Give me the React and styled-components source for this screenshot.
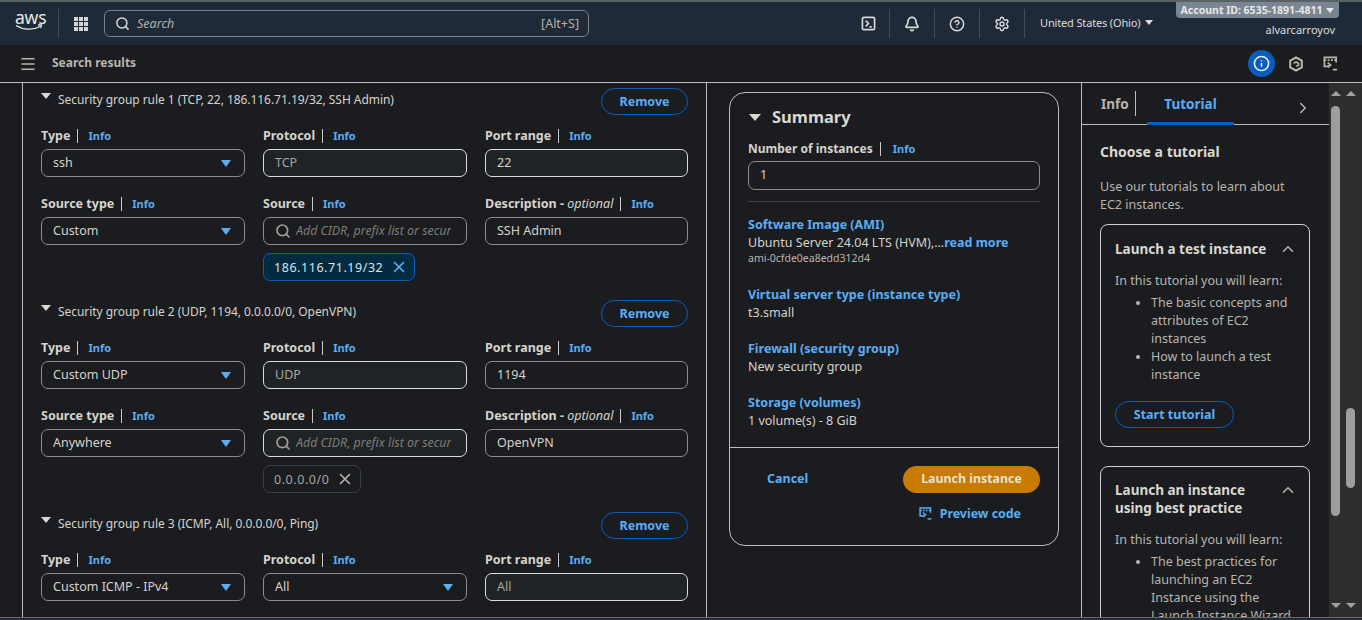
import React from 'react'
import styled, { createGlobalStyle } from 'styled-components'
import { Menu, Search, Bell, CircleHelp, Settings, X, ChevronUp, ChevronRight, Info as InfoIcon } from 'lucide-react'

const Global = createGlobalStyle`
  html, body { margin: 0; padding: 0; background: #1a1c1f; overflow: hidden; }
  * { box-sizing: border-box; }
  body { font-family: "Noto Sans", "Open Sans", sans-serif; font-size: 13px; color: #d6d3cc; }
`

const Page = styled.div`
  width: 1362px;
  height: 620px;
  display: flex;
  flex-direction: column;
  overflow: hidden;
  border-top: 2px solid #5b6266;
`
const Header = styled.header`
  height: 43px;
  flex: none;
  background: #1f2a38;
  display: flex;
  align-items: center;
  padding-left: 15px;
`
const Logo = styled.div`
  width: 43px;
  height: 29px;
  display: flex;
  flex-direction: column;
  color: #e8e8e8;
  font-size: 17.5px;
  line-height: 16px;
  letter-spacing: -0.2px;
  svg { display: block; margin-top: -1px; }
`
const Sep = styled.span`
  width: 1px;
  height: 29px;
  background: #414d5c;
  flex: none;
`
const GridIcon = styled.div`
  margin-left: 15px;
  width: 14px;
  display: grid;
  grid-template-columns: repeat(3, 4px);
  gap: 1px;
  span { height: 4px; background: #d5d5d5; }
`
const SearchBox = styled.div`
  margin-left: 16px;
  width: 485px;
  height: 27px;
  border: 1px solid #7f8184;
  border-radius: 6px;
  display: flex;
  align-items: center;
  padding: 0 9px 0 10px;
  color: #b5b2ab;
  font-size: 12.5px;
  em { margin-left: 7px; flex: 1; }
`
const HeadIcon = styled.div`
  width: 44px;
  flex: none;
  display: flex;
  justify-content: center;
  color: #d8d8d8;
`
const ShellIcon = styled(HeadIcon)`
  margin-left: 258px;
  width: 42px;
`
const Region = styled.div`
  margin-left: 15px;
  width: 136px;
  font-size: 11px;
  letter-spacing: -0.15px;
  color: #dcdcdc;
  display: flex;
  align-items: center;
  gap: 5px;
  margin-top: -3px;
`
const Caret = styled.span`
  width: 0;
  height: 0;
  flex: none;
  border-left: ${p => p.$size}px solid transparent;
  border-right: ${p => p.$size}px solid transparent;
  border-top: ${p => p.$size + 1}px solid ${p => p.$color};
`
const Account = styled.div`
  align-self: flex-start;
  display: flex;
  flex-direction: column;
  align-items: flex-end;
  width: 163px;
`
const AccountBadge = styled.div`
  width: 163px;
  height: 16px;
  background: #7a8592;
  border-radius: 0 0 4px 4px;
  color: #e8e8e8;
  font-size: 10.5px;
  font-weight: 700;
  display: flex;
  align-items: center;
  justify-content: center;
  gap: 4px;
  white-space: nowrap;
`
const UserName = styled.div`
  margin-top: 4px;
  padding-right: 4px;
  font-size: 11px;
  color: #dcdcdc;
`
const SubBar = styled.div`
  height: 38px;
  flex: none;
  display: flex;
  align-items: center;
  padding: 0 22px 0 19px;
  border-bottom: 1px solid #bdbdbd;
  color: #b9b5ad;
  strong { margin-left: 15px; margin-top: -2px; font-size: 12px; flex: 1; }
`
const BlueCircle = styled.div`
  width: 27px;
  height: 27px;
  border-radius: 50%;
  background: #0a5dbf;
  color: #e8eef5;
  display: flex;
  align-items: center;
  justify-content: center;
`
const SubIcon = styled.div`
  margin-left: ${p => p.$gap}px;
  width: 20px;
  display: flex;
  justify-content: center;
`
const Main = styled.div`
  flex: 1;
  min-height: 0;
  display: flex;
`
const Form = styled.section`
  margin-left: 22px;
  width: 685px;
  flex: none;
  border-left: 1px solid #bdbdbd;
  border-right: 1px solid #bdbdbd;
  padding: 5px 18px 0;
  overflow: hidden;
`
const Rule = styled.div`
  margin-bottom: 19px;
`
const RuleHead = styled.div`
  height: 27px;
  margin-bottom: 12px;
  display: flex;
  justify-content: space-between;
`
const RuleTitle = styled.div`
  display: flex;
  gap: 7px;
  font-size: 12px;
  letter-spacing: -0.05px;
  line-height: 24px;
  color: #d6d3cc;
  span:first-child { margin-top: 5px; }
`
const Triangle = styled.span`
  width: 0;
  height: 0;
  flex: none;
  align-self: ${p => (p.$center ? 'center' : 'flex-start')};
  border-left: ${p => p.$size}px solid transparent;
  border-right: ${p => p.$size}px solid transparent;
  border-top: ${p => p.$size + 1}px solid #d9d7d1;
`
const OutlineButton = styled.button`
  width: ${p => p.$width}px;
  height: 27px;
  border: 1px solid #0a5dbf;
  border-radius: 14px;
  background: none;
  color: #5aaef5;
  font: 700 12.5px "Noto Sans", sans-serif;
  padding: 0;
`
const Fields = styled.div`
  display: grid;
  grid-template-columns: 204px 204px 203px;
  column-gap: 18px;
  row-gap: 18px;
  align-items: start;
`
const LabelRow = styled.div`
  height: 16px;
  margin-bottom: 6px;
  display: flex;
  align-items: center;
  font-size: 12.5px;
  font-weight: 700;
  color: #d5d3cd;
  white-space: nowrap;
  em { font-weight: 400; }
`
const InfoLink = styled.span`
  margin-left: 7px;
  padding-left: 10px;
  margin-top: 1px;
  height: 14px;
  line-height: 14px;
  border-left: 1px solid #c9c9c9;
  font-size: 11px;
  font-weight: 700;
  color: #5aaef5;
`
const CountLabel = styled(LabelRow)`
  font-size: 12px;
  margin-bottom: 5px;
  ${InfoLink} { padding-left: 12px; }
`
const Control = styled.div`
  height: 28px;
  border-radius: 7px;
  border: 1px solid ${p => (p.$disabled ? '#dcdcdc' : '#8d8d8d')};
  background: ${p => (p.$disabled ? '#1f2325' : 'transparent')};
  color: ${p => (p.$muted ? '#a8a6a0' : '#d6d3cc')};
  font-size: 12.5px;
  display: flex;
  align-items: center;
  padding: 0 11px 2px;
  overflow: hidden;
  white-space: nowrap;
`
const SelectCaret = styled.span`
  margin-left: auto;
  margin-right: 2px;
  margin-top: 2px;
  width: 0;
  height: 0;
  border-left: 5px solid transparent;
  border-right: 5px solid transparent;
  border-top: 7px solid #5aaef5;
`
const Placeholder = styled.em`
  margin-left: 5px;
  color: #7f7d78;
  font-size: 12.4px;
  overflow: hidden;
`
const Token = styled.div`
  margin-top: 8px;
  height: 28px;
  width: fit-content;
  display: flex;
  align-items: center;
  gap: 7px;
  padding: 0 6px 0 10px;
  font-size: 12.5px;
  letter-spacing: 0.55px;
  border-radius: 7px;
  border: 1px solid ${p => (p.$active ? '#0a5dbf' : '#3c3f42')};
  background: ${p => (p.$active ? '#022b3f' : 'transparent')};
  color: ${p => (p.$active ? '#d6e4ee' : '#a8a6a0')};
  svg { color: ${p => (p.$active ? '#5aaef5' : '#b5b2ab')}; }
`
const SummaryCol = styled.section`
  width: 375px;
  flex: none;
  padding: 9px 22px 0 22px;
  border-right: 1px solid #bdbdbd;
`
const SummaryCard = styled.div`
  width: 330px;
  height: 454px;
  border: 1px solid #bdbdbd;
  border-radius: 16px;
  display: flex;
  flex-direction: column;
`
const SummaryBody = styled.div`
  height: 355px;
  flex: none;
  padding: 13px 18px 0;
  border-bottom: 1px solid #bdbdbd;
`
const SummaryTitle = styled.h2`
  margin: 0 0 12px;
  display: flex;
  align-items: center;
  gap: 11px;
  font-size: 16.5px;
  line-height: 22px;
  color: #d9d7d1;
  padding-left: 1px;
`
const CountInput = styled(Control)`
  height: 29px;
`
const Divider = styled.div`
  margin: 11px 0 14px;
  height: 1px;
  background: #414345;
`
const SumGroup = styled.div`
  margin-bottom: 18px;
  line-height: 18px;
  font-size: 12.5px;
`
const SumLink = styled.div`
  font-weight: 700;
  color: #5aaef5;
`
const ReadMore = styled.span`
  font-weight: 700;
  color: #5aaef5;
`
const AmiId = styled.div`
  margin-top: -1px;
  padding-bottom: 3px;
  font-size: 10.5px;
  line-height: 14px;
  color: #b9b5ad;
`
const SummaryFoot = styled.div`
  padding: 18px 18px 0 37px;
  display: flex;
  justify-content: space-between;
  align-items: flex-start;
`
const Cancel = styled.div`
  font-weight: 700;
  font-size: 12.5px;
  line-height: 26px;
  color: #5aaef5;
`
const FootRight = styled.div`
  display: flex;
  flex-direction: column;
  align-items: flex-end;
  gap: 12px;
`
const Launch = styled.div`
  width: 137px;
  height: 27px;
  border-radius: 14px;
  background: #c97a00;
  color: #e6e0d4;
  font-weight: 700;
  font-size: 12.4px;
  padding-bottom: 2px;
  display: flex;
  align-items: center;
  justify-content: center;
`
const Preview = styled.div`
  display: flex;
  align-items: center;
  gap: 7px;
  padding-right: 19px;
  font-weight: 700;
  font-size: 12.4px;
  color: #5aaef5;
`
const Help = styled.aside`
  width: 247px;
  flex: none;
  overflow: hidden;
`
const Tabs = styled.div`
  height: 42px;
  border-bottom: 1px solid #bdbdbd;
  display: flex;
  padding-left: 19px;
  position: relative;
  font-size: 13.5px;
  font-weight: 700;
`
const TabInfo = styled.div`
  width: 35px;
  line-height: 43px;
  color: #b9b5ad;
  position: relative;
  &::after {
    content: '';
    position: absolute;
    right: 0;
    top: 8px;
    height: 25px;
    width: 1px;
    background: #bdbdbd;
  }
`
const TabActive = styled.div`
  width: 87px;
  margin-left: 11px;
  text-align: center;
  line-height: 43px;
  color: #5aaef5;
  border-bottom: 3px solid #0a5dbf;
  height: 42px;
`
const TabNext = styled.div`
  position: absolute;
  right: 17px;
  top: 16px;
  color: #b9b5ad;
  display: flex;
`
const HelpBody = styled.div`
  padding: 17px 18px 0 18px;
`
const HelpTitle = styled.h3`
  margin: 0 0 16px;
  font-size: 14px;
  line-height: 20px;
  color: #d9d7d1;
`
const HelpText = styled.p`
  margin: 0 20px 10px 0;
  font-size: 12.5px;
  line-height: 18px;
  color: #b9b5ad;
`
const TutorialCard = styled.div`
  width: 210px;
  border: 1px solid #d0d0d0;
  border-radius: 8px;
  padding: ${p => p.$top}px 14px 18px;
  margin-bottom: 19px;
  flex: none;
`
const CardHead = styled.div`
  display: flex;
  justify-content: space-between;
  align-items: flex-start;
  margin-bottom: 14px;
  font-size: 13.5px;
  font-weight: 700;
  line-height: 18px;
  color: #d9d7d1;
  svg { color: #b9b5ad; margin-right: -2px; flex: none; }
`
const Learn = styled.div`
  font-size: 12.5px;
  line-height: 18px;
  color: #b9b5ad;
  margin-bottom: 4px;
`
const Bullets = styled.ul`
  margin: 0 0 17px;
  padding-left: 36px;
  font-size: 12.5px;
  line-height: 18px;
  color: #b9b5ad;
`
const Scrollbars = styled.div`
  flex: 1;
  background: #2e2e2e;
  display: flex;
  padding: 0 7px 0 2px;
  justify-content: space-between;
`
const Track = styled.div`
  width: 9px;
  display: flex;
  flex-direction: column;
  align-items: center;
  padding: 8px 0 9px;
`
const Arrow = styled.span`
  width: 0;
  height: 0;
  border-left: 5px solid transparent;
  border-right: 5px solid transparent;
  ${p => (p.$down ? 'margin-top: auto; border-top: 5px solid #a0a0a0;' : 'border-bottom: 5px solid #a0a0a0;')}
`
const Thumb = styled.div`
  width: 9px;
  border-radius: 5px;
  background: #9e9e9e;
  height: ${p => p.$height}px;
  margin-top: ${p => p.$offset}px;
`
const FootStrip = styled.div`
  height: 3px;
  flex: none;
  background: #1f2a38;
  border-top: 1px solid #6f6a60;
`

const Label = ({ children }) => (
  <LabelRow>{children}<InfoLink>Info</InfoLink></LabelRow>
)

const TermIcon = ({ color = 'currentColor', size = 18 }) => (
  <svg width={size} height={size} viewBox="0 0 18 18" fill="none" stroke={color} strokeWidth="1.8">
    <path d="M8 12H2.5V2.5h12.5V8" />
    <path d="M2.5 5.5h12.5" strokeDasharray="2 1.5" />
    <path d="M6 8l3 2.5L6 13" />
    <path d="M11.5 15.5h4.5" />
  </svg>
)

const Rows = [
  {
    title: 'Security group rule 1 (TCP, 22, 186.116.71.19/32, SSH Admin)',
    type: 'ssh', protocol: 'TCP', port: '22', source: 'Custom',
    desc: 'SSH Admin', token: '186.116.71.19/32', active: true,
  },
  {
    title: 'Security group rule 2 (UDP, 1194, 0.0.0.0/0, OpenVPN)',
    type: 'Custom UDP', protocol: 'UDP', port: '1194', source: 'Anywhere',
    desc: 'OpenVPN', token: '0.0.0.0/0',
  },
]

const RuleBlock = ({ rule }) => (
  <Rule>
    <RuleHead>
      <RuleTitle><Triangle $size={5} /><div>{rule.title}</div></RuleTitle>
      <OutlineButton $width={87}>Remove</OutlineButton>
    </RuleHead>
    <Fields>
      <div>
        <Label>Type</Label>
        <Control>{rule.type}<SelectCaret /></Control>
      </div>
      <div>
        <Label>Protocol</Label>
        <Control $disabled $muted>{rule.protocol}</Control>
      </div>
      <div>
        <Label>Port range</Label>
        <Control $disabled={rule.active}>{rule.port}</Control>
      </div>
      <div>
        <Label>Source type</Label>
        <Control>{rule.source}<SelectCaret /></Control>
      </div>
      <div>
        <Label>Source</Label>
        <Control $disabled={!rule.active}>
          <Search size={16} color="#a09c94" strokeWidth={2.6} style={{ flex: 'none', marginTop: '2px' }} />
          <Placeholder>Add CIDR, prefix list or secur</Placeholder>
        </Control>
        <Token $active={rule.active}>{rule.token}<X size={18} strokeWidth={2.2} /></Token>
      </div>
      <div>
        <LabelRow>Description -&nbsp;<em>optional</em><InfoLink>Info</InfoLink></LabelRow>
        <Control>{rule.desc}</Control>
      </div>
    </Fields>
  </Rule>
)

export default function App() {
  return (
    <Page>
      <Global />
      <Header>
        <Logo>
          aws
          <svg width="28" height="8" viewBox="0 0 28 8" fill="none" stroke="#e8e8e8" strokeWidth="1.3">
            <path d="M1 1.5c7 4.5 17 5 24 1" />
            <path d="M23 1h3.5l-1 3" />
          </svg>
        </Logo>
        <Sep />
        <GridIcon>{Array.from({ length: 9 }).map((_, i) => <span key={i} />)}</GridIcon>
        <SearchBox>
          <Search size={15} color="#d8d8d8" strokeWidth={2.4} />
          <em>Search</em>
          <span>[Alt+S]</span>
        </SearchBox>
        <ShellIcon>
          <svg width="15" height="15" viewBox="0 0 16 16" fill="none" stroke="currentColor" strokeWidth="1.8">
            <rect x="1.5" y="1.5" width="13" height="13" rx="1.5" />
            <path d="M5 5l3 3-3 3M9 11.5h2.5" />
          </svg>
        </ShellIcon>
        <Sep />
        <HeadIcon><Bell size={16} strokeWidth={2.6} /></HeadIcon>
        <Sep />
        <HeadIcon><CircleHelp size={16} strokeWidth={2.2} /></HeadIcon>
        <Sep />
        <HeadIcon><Settings size={16} strokeWidth={2.2} /></HeadIcon>
        <Sep />
        <Region>United States (Ohio)<Caret $size={4} $color="#dcdcdc" /></Region>
        <Account>
          <AccountBadge>Account ID: 6535-1891-4811 <Caret $size={4} $color="#e8e8e8" /></AccountBadge>
          <UserName>alvarcarroyov</UserName>
        </Account>
      </Header>
      <SubBar>
        <Menu size={18} strokeWidth={2} />
        <strong>Search results</strong>
        <BlueCircle><InfoIcon size={17} strokeWidth={2.2} /></BlueCircle>
        <SubIcon $gap={11}>
          <svg width="16" height="16" viewBox="0 0 16 16" fill="none" stroke="currentColor" strokeWidth="2">
            <path d="M8 1.5l5.8 3.2v6.6L8 14.5l-5.8-3.2V4.7z" />
            <path d="M5.5 7.2L8 6l2.5 1.2v2L8 10.4" strokeWidth="1.6" />
          </svg>
        </SubIcon>
        <SubIcon $gap={14}><TermIcon size={17} /></SubIcon>
      </SubBar>
      <Main>
        <Form>
          {Rows.map(r => <RuleBlock key={r.title} rule={r} />)}
          <Rule>
            <RuleHead>
              <RuleTitle><Triangle $size={5} /><div>Security group rule 3 (ICMP, All, 0.0.0.0/0, Ping)</div></RuleTitle>
              <OutlineButton $width={87}>Remove</OutlineButton>
            </RuleHead>
            <Fields>
              <div>
                <Label>Type</Label>
                <Control>Custom ICMP - IPv4<SelectCaret /></Control>
              </div>
              <div>
                <Label>Protocol</Label>
                <Control>All<SelectCaret /></Control>
              </div>
              <div>
                <Label>Port range</Label>
                <Control $disabled $muted>All</Control>
              </div>
            </Fields>
          </Rule>
        </Form>
        <SummaryCol>
          <SummaryCard>
            <SummaryBody>
              <SummaryTitle><Triangle $size={6} $center />Summary</SummaryTitle>
              <CountLabel>Number of instances<InfoLink>Info</InfoLink></CountLabel>
              <CountInput>1</CountInput>
              <Divider />
              <SumGroup>
                <SumLink>Software Image (AMI)</SumLink>
                <div>Ubuntu Server 24.04 LTS (HVM),...<ReadMore>read more</ReadMore></div>
                <AmiId>ami-0cfde0ea8edd312d4</AmiId>
              </SumGroup>
              <SumGroup>
                <SumLink>Virtual server type (instance type)</SumLink>
                <div>t3.small</div>
              </SumGroup>
              <SumGroup>
                <SumLink>Firewall (security group)</SumLink>
                <div>New security group</div>
              </SumGroup>
              <SumGroup>
                <SumLink>Storage (volumes)</SumLink>
                <div>1 volume(s) - 8 GiB</div>
              </SumGroup>
            </SummaryBody>
            <SummaryFoot>
              <Cancel>Cancel</Cancel>
              <FootRight>
                <Launch>Launch instance</Launch>
                <Preview><TermIcon size={15} />Preview code</Preview>
              </FootRight>
            </SummaryFoot>
          </SummaryCard>
        </SummaryCol>
        <Help>
          <Tabs>
            <TabInfo>Info</TabInfo>
            <TabActive>Tutorial</TabActive>
            <TabNext><ChevronRight size={18} strokeWidth={2} /></TabNext>
          </Tabs>
          <HelpBody>
            <HelpTitle>Choose a tutorial</HelpTitle>
            <HelpText>Use our tutorials to learn about EC2 instances.</HelpText>
            <TutorialCard $top={15}>
              <CardHead>Launch a test instance<ChevronUp size={18} strokeWidth={2} /></CardHead>
              <Learn>In this tutorial you will learn:</Learn>
              <Bullets>
                <li>The basic concepts and attributes of EC2 instances</li>
                <li>How to launch a test instance</li>
              </Bullets>
              <OutlineButton $width={119}>Start tutorial</OutlineButton>
            </TutorialCard>
            <TutorialCard $top={14}>
              <CardHead>Launch an instance using best practice<ChevronUp size={18} strokeWidth={2} /></CardHead>
              <Learn>In this tutorial you will learn:</Learn>
              <Bullets>
                <li>The best practices for launching an EC2 Instance using the Launch Instance Wizard</li>
              </Bullets>
            </TutorialCard>
          </HelpBody>
        </Help>
        <Scrollbars>
          <Track>
            <Arrow />
            <Thumb $height={410} $offset={10} />
            <Arrow $down />
          </Track>
          <Track>
            <Arrow />
            <Thumb $height={80} $offset={312} />
            <Arrow $down />
          </Track>
        </Scrollbars>
      </Main>
      <FootStrip />
    </Page>
  )
}
